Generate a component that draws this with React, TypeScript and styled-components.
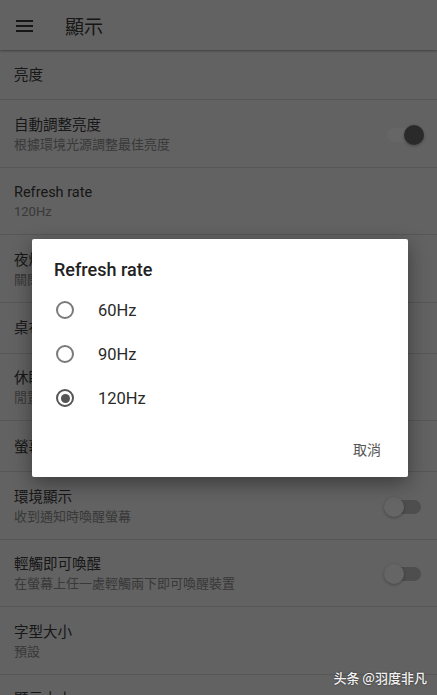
import React from "react";
import styled, { createGlobalStyle } from "styled-components";

const GlobalStyle = createGlobalStyle`
  html, body {
    margin: 0;
    padding: 0;
    background: #f4f4f4;
    font-family: Roboto, "Noto Sans CJK TC", "Noto Sans", sans-serif;
    overflow: hidden;
  }
  * { box-sizing: border-box; }
`;

const Screen = styled.div`
  position: relative;
  width: 437px;
  height: 695px;
  overflow: hidden;
  background: #f4f4f4;
`;

const AppBar = styled.header`
  height: 50px;
  display: flex;
  align-items: center;
  padding: 1px 0 0 16px;
  gap: 32px;
  background: #f4f4f4;
  box-shadow: 0 1px 2px rgba(0, 0, 0, 0.35);
  position: relative;
  z-index: 1;
`;

const Hamburger = styled.div`
  width: 17px;
  height: 12px;
  display: flex;
  flex-direction: column;
  justify-content: space-between;
  span {
    display: block;
    height: 2px;
    background: #383838;
  }
`;

const BarTitle = styled.h1`
  margin: 0;
  font-size: 19px;
  font-weight: 400;
  color: #383838;
`;

const List = styled.div`
  display: flex;
  flex-direction: column;
`;

const Row = styled.div<{ $h: number }>`
  height: ${(p) => p.$h}px;
  flex: none;
  display: flex;
  align-items: center;
  justify-content: space-between;
  padding: 3px 16px 0 14px;
  border-bottom: 1px solid #dadada;
`;

const Texts = styled.div`
  display: flex;
  flex-direction: column;
`;

const Title = styled.div`
  font-size: 14.5px;
  line-height: 20px;
  color: #3a3a3a;
`;

const Sub = styled.div`
  font-size: 13px;
  line-height: 18px;
  color: #8e8e8e;
`;

const Switch = styled.div<{ $on: boolean }>`
  position: relative;
  width: 34px;
  height: 14px;
  border-radius: 7px;
  background: ${(p) => (p.$on ? "#ffffff" : "#c2c2c2")};
  &::after {
    content: "";
    position: absolute;
    top: -3px;
    left: ${(p) => (p.$on ? "17px" : "-3px")};
    width: 20px;
    height: 20px;
    border-radius: 50%;
    background: ${(p) => (p.$on ? "#6a6a6a" : "#fdfdfd")};
    box-shadow: 0 1px 3px rgba(0, 0, 0, 0.3);
  }
`;

const Scrim = styled.div`
  position: absolute;
  inset: 0;
  background: rgba(0, 0, 0, 0.6);
  z-index: 5;
  display: flex;
  align-items: flex-start;
  justify-content: center;
  padding: 239px 0 0 3px;
`;

const Dialog = styled.div`
  width: 376px;
  height: 238px;
  background: #ffffff;
  border-radius: 2px;
  box-shadow: 0 6px 20px rgba(0, 0, 0, 0.4);
  display: flex;
  flex-direction: column;
  padding-top: 19px;
`;

const DialogTitle = styled.div`
  font-size: 18px;
  font-weight: 500;
  line-height: 24px;
  color: #222222;
  padding-left: 22px;
  margin-bottom: 6px;
`;

const Option = styled.div`
  height: 44px;
  display: flex;
  align-items: center;
  padding-left: 24px;
  gap: 24px;
`;

const Radio = styled.div<{ $checked: boolean }>`
  width: 18px;
  height: 18px;
  border-radius: 50%;
  border: 2px solid ${(p) => (p.$checked ? "#555555" : "#7a7a7a")};
  display: flex;
  align-items: center;
  justify-content: center;
  &::after {
    content: "";
    width: 9px;
    height: 9px;
    border-radius: 50%;
    background: #555555;
    display: ${(p) => (p.$checked ? "block" : "none")};
  }
`;

const OptionLabel = styled.span`
  font-size: 16.5px;
  color: #2a2a2a;
`;

const Actions = styled.div`
  margin-top: auto;
  display: flex;
  justify-content: flex-end;
  padding: 0 19px 10px 0;
`;

const TextButton = styled.button`
  height: 36px;
  padding: 0 8px;
  border: none;
  background: none;
  font-family: Roboto, "Noto Sans CJK TC", sans-serif;
  font-size: 14px;
  color: #555555;
`;

const Watermark = styled.div`
  position: absolute;
  right: 10px;
  bottom: 8px;
  z-index: 10;
  font-family: "Noto Sans CJK SC", sans-serif;
  font-size: 13px;
  font-weight: 500;
  color: #f2f2f2;
  text-shadow: 0 0 2px rgba(0, 0, 0, 0.6);
`;

type Item = { title: string; sub?: string; h: number; toggle?: boolean };

const items: Item[] = [
  { title: "亮度", h: 50 },
  { title: "自動調整亮度", sub: "根據環境光源調整最佳亮度", h: 67.5, toggle: true },
  { title: "Refresh rate", sub: "120Hz", h: 67.5 },
  { title: "夜燈", sub: "關閉/永遠不會自動開啟", h: 67.5 },
  { title: "桌布", h: 51 },
  { title: "休眠", sub: "閒置 30 秒後", h: 67.5 },
  { title: "螢幕保護程式", h: 51 },
  { title: "環境顯示", sub: "收到通知時喚醒螢幕", h: 67.5, toggle: false },
  { title: "輕觸即可喚醒", sub: "在螢幕上任一處輕觸兩下即可喚醒裝置", h: 67.5, toggle: false },
  { title: "字型大小", sub: "預設", h: 67.5 },
  { title: "顯示大小", sub: "預設", h: 67.5 },
];

const options = ["60Hz", "90Hz", "120Hz"];

export default function App() {
  return (
    <Screen>
      <GlobalStyle />
      <AppBar>
        <Hamburger>
          <span />
          <span />
          <span />
        </Hamburger>
        <BarTitle>顯示</BarTitle>
      </AppBar>
      <List>
        {items.map((it) => (
          <Row key={it.title} $h={it.h}>
            <Texts>
              <Title>{it.title}</Title>
              {it.sub && <Sub>{it.sub}</Sub>}
            </Texts>
            {it.toggle !== undefined && <Switch $on={it.toggle} />}
          </Row>
        ))}
      </List>
      <Scrim>
        <Dialog>
          <DialogTitle>Refresh rate</DialogTitle>
          {options.map((o) => (
            <Option key={o}>
              <Radio $checked={o === "120Hz"} />
              <OptionLabel>{o}</OptionLabel>
            </Option>
          ))}
          <Actions>
            <TextButton>取消</TextButton>
          </Actions>
        </Dialog>
      </Scrim>
      <Watermark>头条 @羽度非凡</Watermark>
    </Screen>
  );
}
